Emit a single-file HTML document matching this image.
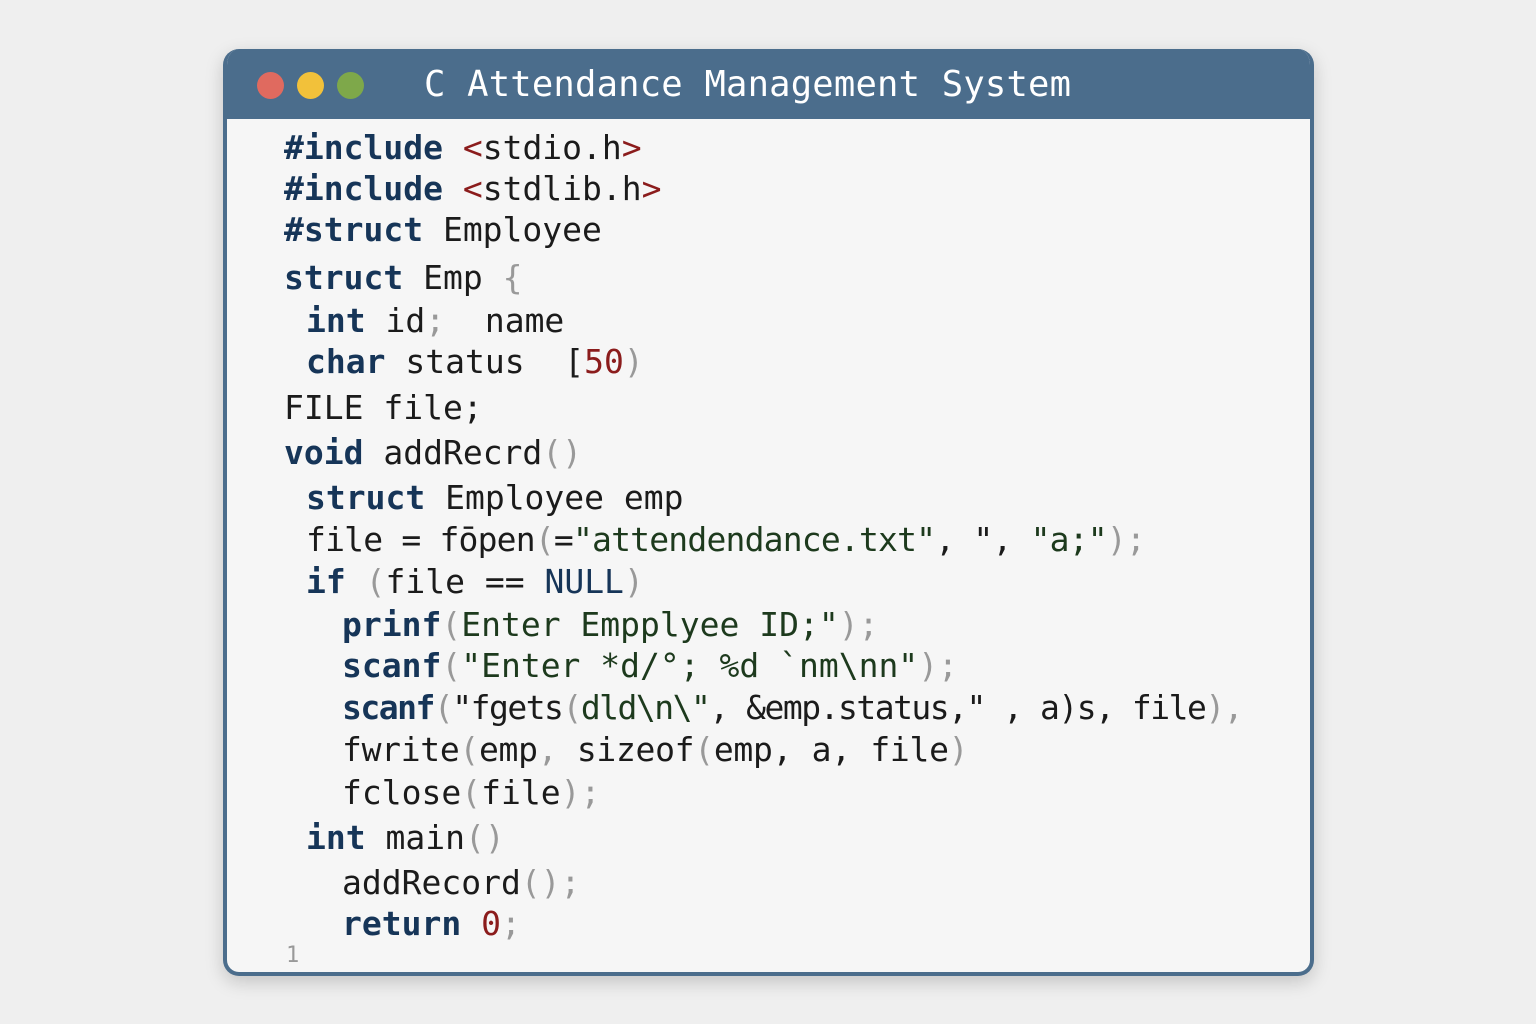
<!DOCTYPE html>
<html><head><meta charset="utf-8"><style>
body{margin:0;width:1536px;height:1024px;background:#efefef;position:relative;overflow:hidden;font-family:"DejaVu Sans Mono","Liberation Mono",monospace}
.win{position:absolute;left:223px;top:49px;width:1083px;height:923px;background:#f6f6f6;border:4px solid #4b6d8c;border-top:none;border-radius:16px;box-shadow:0 6px 18px rgba(0,0,0,.18);overflow:hidden}
.bar{position:absolute;left:0;top:0;width:100%;height:70px;background:#4b6d8c}
.dot{position:absolute;top:23px;width:27px;height:27px;border-radius:50%}
.title{position:absolute;left:197px;top:15px;color:#fff;font-size:35.5px;letter-spacing:0.2px;white-space:pre}
.l{position:absolute;font-size:33px;line-height:40px;white-space:pre;color:#1b1b1b}
.k{color:#163558;font-weight:bold}
.p{color:#999}
.r{color:#8b1c1c}
.s{color:#1d3a1d}
</style></head><body>
<div class="win">
<div class="bar"></div>
<div class="dot" style="left:30px;background:#e06a5f"></div>
<div class="dot" style="left:70px;background:#f2c13a"></div>
<div class="dot" style="left:110px;background:#7ea84a"></div>
<div class="title">C Attendance Management System</div>
</div>
<div class="l" style="left:284px;top:128px"><span class="k">#include</span> <span class="r">&lt;</span>stdio.h<span class="r">&gt;</span></div>
<div class="l" style="left:284px;top:169px"><span class="k">#include</span> <span class="r">&lt;</span>stdlib.h<span class="r">&gt;</span></div>
<div class="l" style="left:284px;top:210px"><span class="k">#struct</span> Employee</div>
<div class="l" style="left:284px;top:258px"><span class="k">struct</span> Emp <span class="p">{</span></div>
<div class="l" style="left:306px;top:301px"><span class="k">int</span> id<span class="p">;</span>  name</div>
<div class="l" style="left:306px;top:342px"><span class="k">char</span> status  [<span class="r">50</span><span class="p">)</span></div>
<div class="l" style="left:284px;top:388px">FILE file;</div>
<div class="l" style="left:284px;top:433px"><span class="k">void</span> addRecrd<span class="p">()</span></div>
<div class="l" style="left:306px;top:478px"><span class="k">struct</span> Employee emp</div>
<div class="l" style="left:306px;top:520px;letter-spacing:-0.8px">file = fōpen<span class="p">(</span>=<span class="s">"attendendance.txt"</span>, ", <span class="s">"a;"</span><span class="p">);</span></div>
<div class="l" style="left:306px;top:562px"><span class="k">if</span> <span class="p">(</span>file == <span class="k" style="font-weight:normal">NULL</span><span class="p">)</span></div>
<div class="l" style="left:342px;top:605px"><span class="k">prinf</span><span class="p">(</span><span class="s">Enter Empplyee ID;"</span><span class="p">);</span></div>
<div class="l" style="left:342px;top:646px"><span class="k">scanf</span><span class="p">(</span><span class="s">"Enter *d/°; %d `nm\nn"</span><span class="p">);</span></div>
<div class="l" style="left:342px;top:688px;letter-spacing:-1.5px"><span class="k">scanf</span><span class="p">(</span>"fgets<span class="p">(</span><span class="s">dld\n\"</span>, &amp;emp.status," , a)s, file<span class="p">),</span></div>
<div class="l" style="left:342px;top:730px;letter-spacing:-0.3px">fwrite<span class="p">(</span>emp<span class="p">,</span> sizeof<span class="p">(</span>emp, a, file<span class="p">)</span></div>
<div class="l" style="left:342px;top:773px">fclose<span class="p">(</span>file<span class="p">);</span></div>
<div class="l" style="left:306px;top:818px"><span class="k">int</span> main<span class="p">()</span></div>
<div class="l" style="left:342px;top:863px">addRecord<span class="p">();</span></div>
<div class="l" style="left:342px;top:904px"><span class="k">return</span> <span class="r">0</span><span class="p">;</span></div>
<div class="l" style="left:286px;top:936px;font-size:22px;color:#999">1</div>
</body></html>
